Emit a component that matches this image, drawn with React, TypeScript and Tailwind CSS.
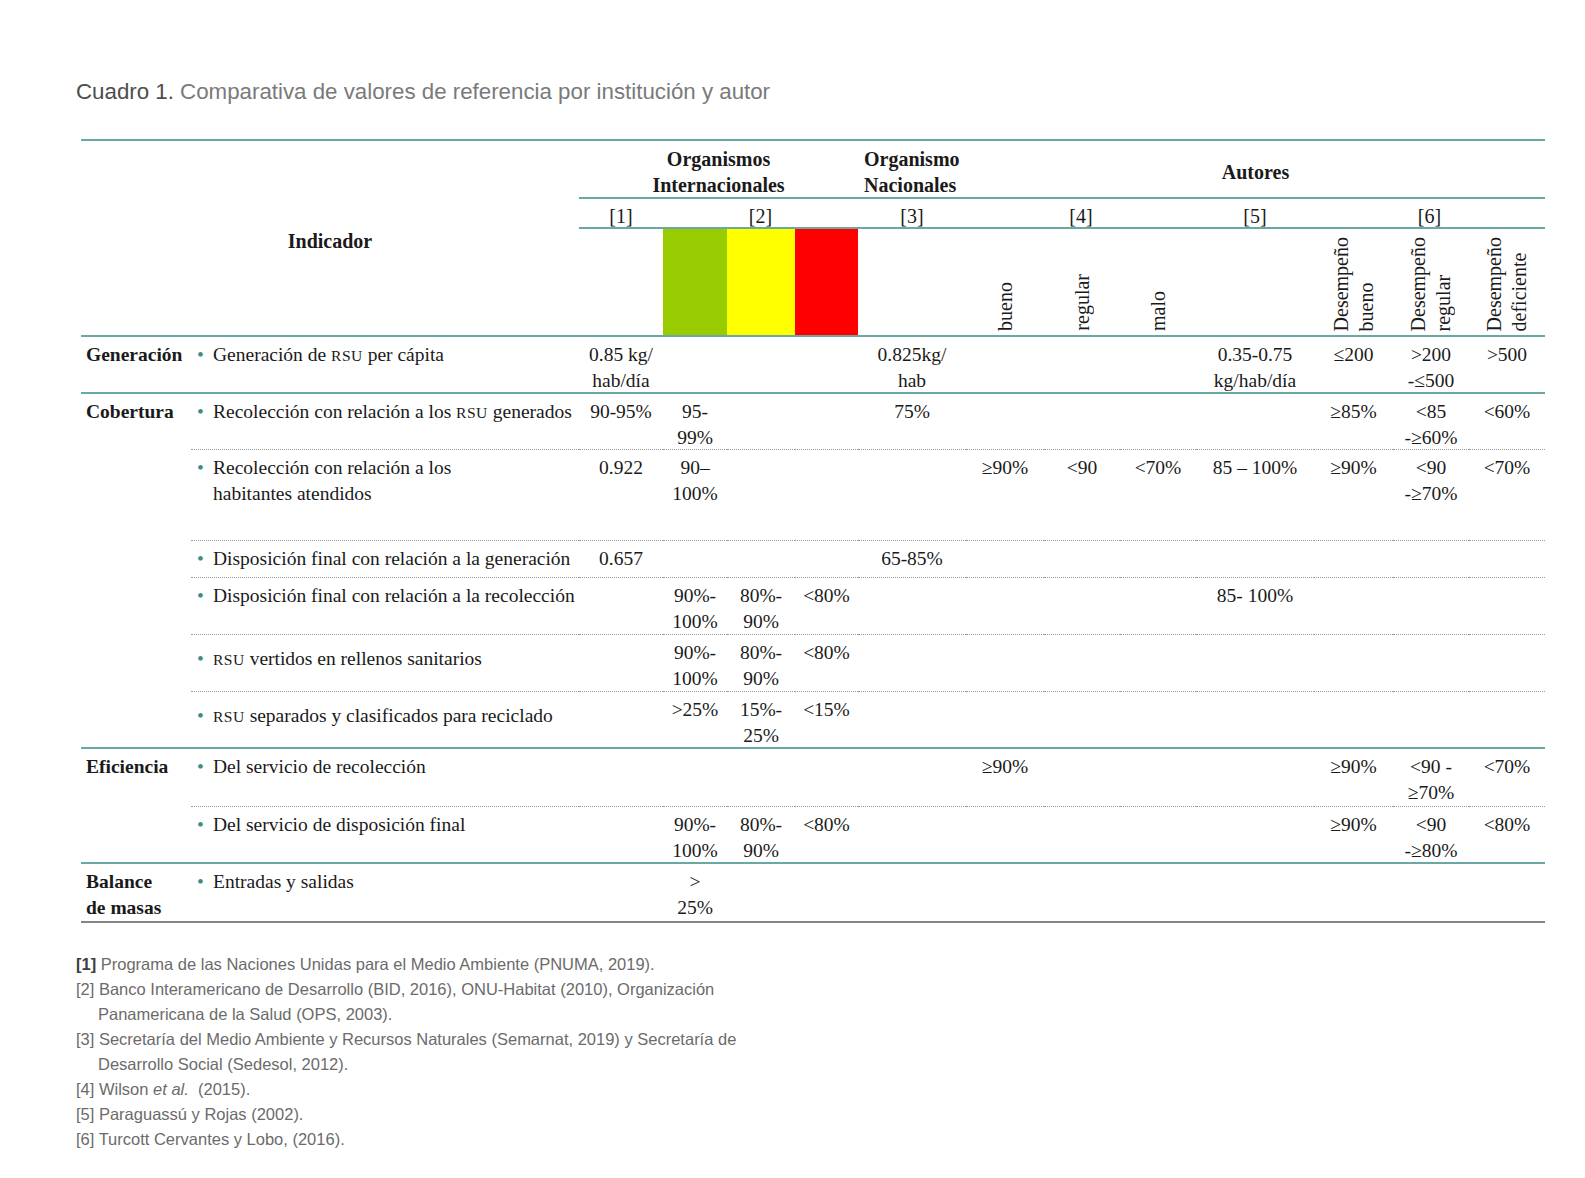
import type { ReactNode } from "react";

const Sc = ({ children }: { children: ReactNode }) => (
  <span className="text-[0.8em] tracking-[0.03em] uppercase">{children}</span>
);

type Val = string | [string, string];

type Row = {
  cat?: ReactNode;
  span?: number;
  ind: ReactNode;
  indTop?: boolean;
  h: number;
  line: "dot" | "teal" | "end";
  v: Val[];
};

const e = "";

// valores por columna: [1], [2] verde, [2] amarillo, [2] rojo, [3], [4] x3, [5], [6] x3
const rows: Row[] = [
  {
    cat: "Generación",
    span: 1,
    ind: <>Generación de <Sc>rsu</Sc> per cápita</>,
    h: 57,
    line: "teal",
    v: [["0.85 kg/", "hab/día"], e, e, e, ["0.825kg/", "hab"], e, e, e, ["0.35-0.75", "kg/hab/día"], "≤200", [">200", "-≤500"], ">500"],
  },
  {
    cat: "Cobertura",
    span: 6,
    ind: <>Recolección con relación a los <Sc>rsu</Sc> generados</>,
    h: 56,
    line: "dot",
    v: ["90-95%", ["95-", "99%"], e, e, "75%", e, e, e, e, "≥85%", ["<85", "-≥60%"], "<60%"],
  },
  {
    ind: <>Recolección con relación a los<br />habitantes atendidos</>,
    h: 91,
    line: "dot",
    v: ["0.922", ["90–", "100%"], e, e, e, "≥90%", "<90", "<70%", "85 – 100%", "≥90%", ["<90", "-≥70%"], "<70%"],
  },
  {
    ind: "Disposición final con relación a la generación",
    h: 37,
    line: "dot",
    v: ["0.657", e, e, e, "65-85%", e, e, e, e, e, e, e],
  },
  {
    ind: "Disposición final con relación a la recolección",
    h: 57,
    line: "dot",
    v: [e, ["90%-", "100%"], ["80%-", "90%"], "<80%", e, e, e, e, "85- 100%", e, e, e],
  },
  {
    ind: <><Sc>rsu</Sc> vertidos en rellenos sanitarios</>,
    indTop: true,
    h: 57,
    line: "dot",
    v: [e, ["90%-", "100%"], ["80%-", "90%"], "<80%", e, e, e, e, e, e, e, e],
  },
  {
    ind: <><Sc>rsu</Sc> separados y clasificados para reciclado</>,
    indTop: true,
    h: 57,
    line: "teal",
    v: [e, ">25%", ["15%-", "25%"], "<15%", e, e, e, e, e, e, e, e],
  },
  {
    cat: "Eficiencia",
    span: 2,
    ind: "Del servicio de recolección",
    h: 58,
    line: "dot",
    v: [e, e, e, e, e, "≥90%", e, e, e, "≥90%", ["<90 -", "≥70%"], "<70%"],
  },
  {
    ind: "Del servicio de disposición final",
    h: 57,
    line: "teal",
    v: [e, ["90%-", "100%"], ["80%-", "90%"], "<80%", e, e, e, e, e, "≥90%", ["<90", "-≥80%"], "<80%"],
  },
  {
    cat: <>Balance<br />de masas</>,
    span: 1,
    ind: "Entradas y salidas",
    h: 57,
    line: "end",
    v: [e, [">", "25%"], e, e, e, e, e, e, e, e, e, e],
  },
];

const lineCls = {
  dot: "border-b border-dotted border-[#9a9a9a]",
  teal: "border-b-2 border-solid border-[#69a8a3]",
  end: "border-b-2 border-solid border-[#858585]",
};
const lineW = { dot: 1, teal: 2, end: 2 };

const widths = [110, 388, 84, 64, 68, 63, 108, 78, 76, 76, 118, 79, 76, 76];

const Vertical = ({ lines }: { lines: string[] }) => (
  <div className="flex h-[106px] items-end justify-center pb-[4px]">
    {lines.length > 0 && (
      <div className="rotate-180 text-left text-[20px] leading-[25px] [writing-mode:vertical-rl]">
        {lines.map((l, j) => (
          <span key={j}>
            {j > 0 && <br />}
            {l}
          </span>
        ))}
      </div>
    )}
  </div>
);

const App = () => {
  const th = "border-t-2 border-b-2 border-solid border-[#69a8a3] p-0 align-top text-[20px]";
  const line = "border-b-2 border-solid border-[#69a8a3] p-0 align-top";
  return (
    <div className="min-h-screen bg-white pl-[76px] pt-[78px] pb-10 font-['Liberation_Sans',Arial,sans-serif]">
      <h1 className="text-[22.3px] leading-[28px] text-[#7a7a7a]">
        <span className="text-[#4d4d4d]">Cuadro 1.</span> Comparativa de valores de referencia por institución y autor
      </h1>

      <table className="mt-[33px] ml-[5px] table-fixed border-separate border-spacing-0 font-['Liberation_Serif','Times_New_Roman',serif] text-[19.5px] leading-[26px] text-[#1a1a1a]">
        <colgroup>
          {widths.map((w, i) => (
            <col key={i} style={{ width: w }} />
          ))}
        </colgroup>
        <thead>
          <tr>
            <th colSpan={2} rowSpan={3} className={`${th} font-bold`}>
              <div className="pt-[87px]">Indicador</div>
            </th>
            <th colSpan={4} className={`${th} font-bold`}>
              <div className="h-[56px] pt-[5px]">
                Organismos
                <br />
                Internacionales
              </div>
            </th>
            <th className={`${th} text-left font-bold`}>
              <div className="h-[56px] pl-[6px] pt-[5px]">
                Organismo
                <br />
                Nacionales
              </div>
            </th>
            <th colSpan={7} className={`${th} font-bold`}>
              <div className="h-[56px] pt-[18px]">Autores</div>
            </th>
          </tr>
          <tr>
            {[
              ["[1]", 1],
              ["[2]", 3],
              ["[3]", 1],
              ["[4]", 3],
              ["[5]", 1],
              ["[6]", 3],
            ].map(([t, s]) => (
              <th key={t as string} colSpan={s as number} className={`${line} font-normal text-[20px]`}>
                <div className="h-[28px] pt-[4px]">{t}</div>
              </th>
            ))}
          </tr>
          <tr>
            <th className={line}>
              <div className="h-[106px]" />
            </th>
            <th className={`${line} bg-[#99cc00]`} />
            <th className={`${line} bg-[#ffff00]`} />
            <th className={`${line} bg-[#ff0000]`} />
            <th className={line} />
            {[["bueno"], ["regular"], ["malo"], [], ["Desempeño", "bueno"], ["Desempeño", "regular"], ["Desempeño", "deficiente"]].map(
              (lines, i) => (
                <th key={i} className={`${line} font-normal`}>
                  <Vertical lines={lines} />
                </th>
              )
            )}
          </tr>
        </thead>
        <tbody>
          {rows.map((r, i) => {
            const lc = lineCls[r.line];
            const ch = r.h - lineW[r.line];
            let catLine = lc;
            if (r.cat !== undefined) {
              const last = rows[i + (r.span ?? 1) - 1];
              catLine = lineCls[last.line];
            }
            return (
              <tr key={i}>
                {r.cat !== undefined && (
                  <td rowSpan={r.span} className={`${catLine} p-0 align-top font-bold whitespace-nowrap`}>
                    <div className="pl-[5px] pt-[5px]">{r.cat}</div>
                  </td>
                )}
                <td className={`${lc} p-0 align-top whitespace-nowrap`}>
                  <div style={{ height: ch }} className={`flex ${r.indTop ? "pt-[11px]" : "pt-[5px]"}`}>
                    <span className="w-[22px] shrink-0 pl-[6px] text-[#3f8b86]">•</span>
                    <span>{r.ind}</span>
                  </div>
                </td>
                {r.v.map((v, j) => (
                  <td key={j} className={`${lc} p-0 align-top text-center whitespace-nowrap`}>
                    <div style={{ height: ch }} className="pt-[5px]">
                      {Array.isArray(v) ? (
                        <>
                          {v[0]}
                          <br />
                          {v[1]}
                        </>
                      ) : (
                        v
                      )}
                    </div>
                  </td>
                ))}
              </tr>
            );
          })}
        </tbody>
      </table>

      <div className="mt-[29px] text-[16.5px] leading-[25px] text-[#6b6b6b]">
        <p>
          <span className="font-bold text-[#3d3d3d]">[1]</span> Programa de las Naciones Unidas para el Medio Ambiente (PNUMA, 2019).
        </p>
        <p className="pl-[22px] -indent-[22px]">
          [2] Banco Interamericano de Desarrollo (BID, 2016), ONU-Habitat (2010), Organización
          <br />
          Panamericana de la Salud (OPS, 2003).
        </p>
        <p className="pl-[22px] -indent-[22px]">
          [3] Secretaría del Medio Ambiente y Recursos Naturales (Semarnat, 2019) y Secretaría de
          <br />
          Desarrollo Social (Sedesol, 2012).
        </p>
        <p>
          [4] Wilson <i>et al.</i>&nbsp; (2015).
        </p>
        <p>[5] Paraguassú y Rojas (2002).</p>
        <p>[6] Turcott Cervantes y Lobo, (2016).</p>
      </div>
    </div>
  );
};

export default App;
